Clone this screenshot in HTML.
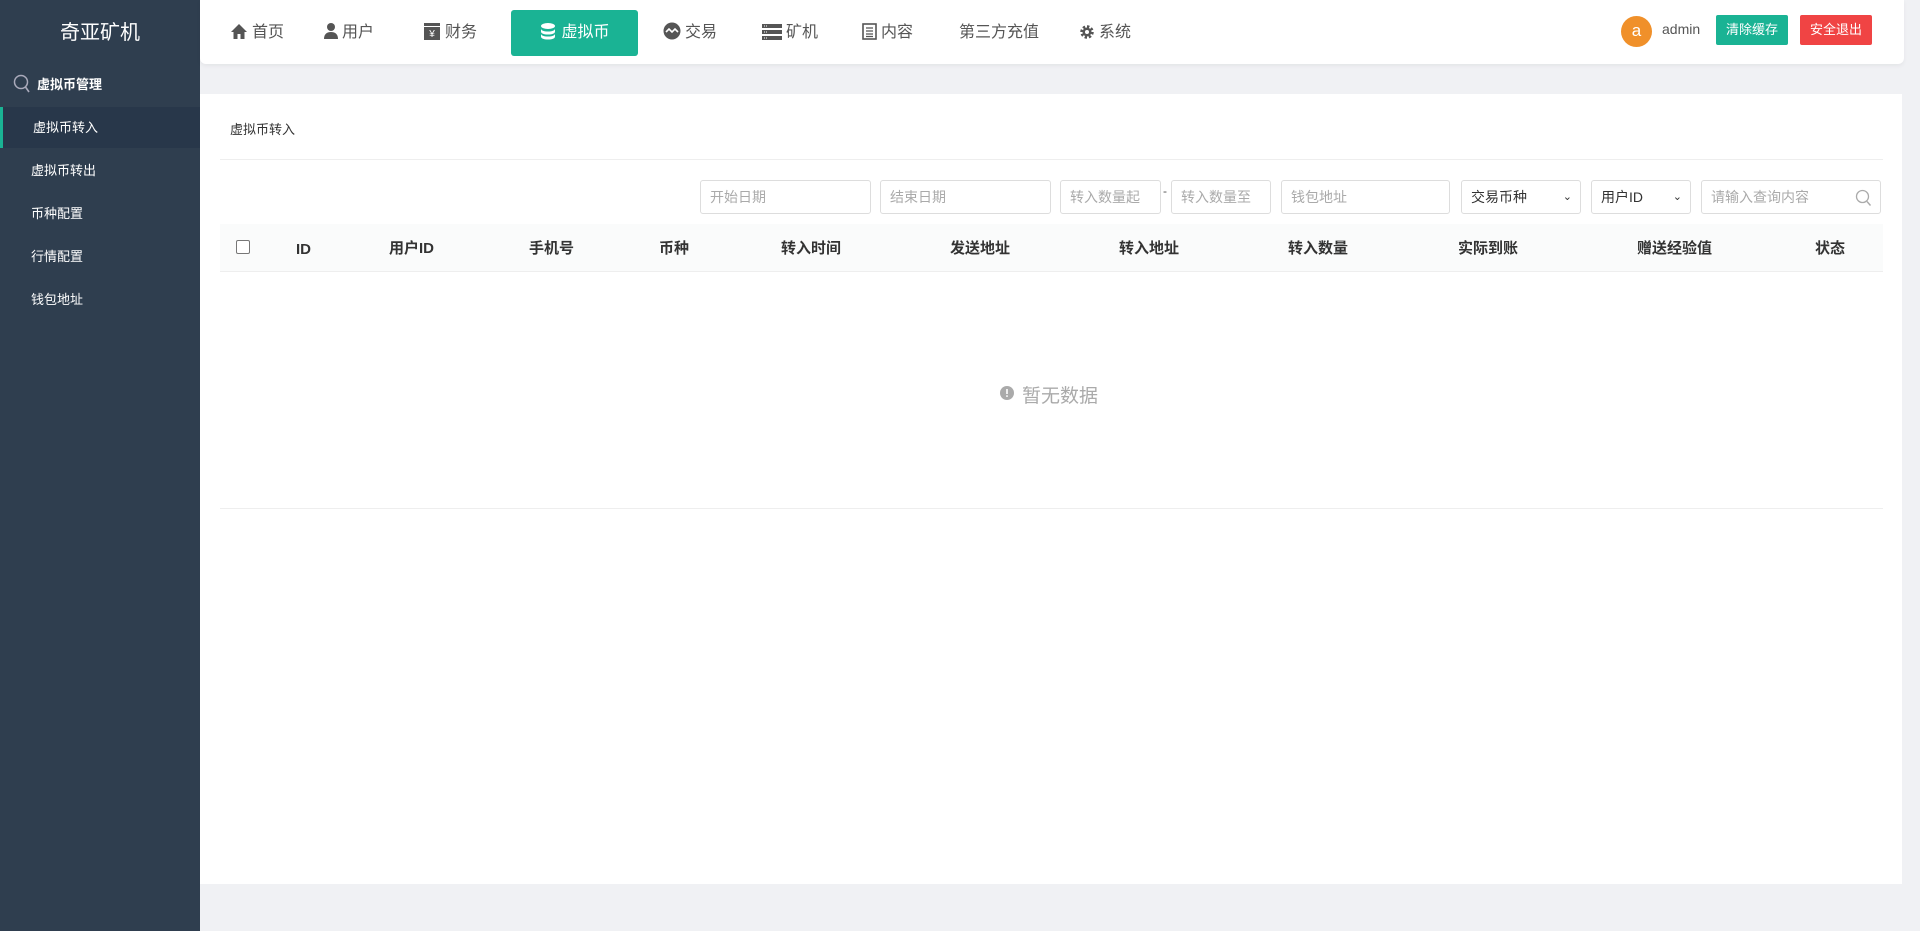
<!DOCTYPE html>
<html><head><meta charset="utf-8"><style>
*{margin:0;padding:0;box-sizing:border-box}
body{width:1920px;height:931px;background:#f0f1f4;font-family:"Liberation Sans","Noto Sans CJK SC",sans-serif;position:relative;overflow:hidden;color:#333}
.a{position:absolute;white-space:nowrap}
#side{position:absolute;left:0;top:0;width:200px;height:931px;background:#2f3e4f}
.mi{position:absolute;left:0;width:200px;height:41px;line-height:41px;color:#fff;font-size:13px;padding-left:31px}
#hdr{position:absolute;left:200px;top:0;width:1704px;height:64px;background:#fff;border-radius:0 0 6px 6px;box-shadow:0 2px 4px rgba(0,0,0,.05)}
.nv{position:absolute;top:22px;font-size:16px;color:#555;line-height:22px}
.nv svg{vertical-align:-3px;margin-right:4px}
.inp{position:absolute;top:180px;height:34px;border:1px solid #ddd;border-radius:3px;background:#fff;font-size:14px;color:#aaa;line-height:32px;padding-left:9px}
.th{position:absolute;top:238px;height:22px;line-height:22px;font-size:15px;font-weight:bold;color:#333}
</style></head><body>
<div id="side">
 <div class="a" style="left:0;width:200px;top:16px;text-align:center;color:#fff;font-size:20px">奇亚矿机</div>
 <svg class="a" style="left:13px;top:74px" width="18" height="20" viewBox="0 0 18 20"><circle cx="8" cy="8" r="6.5" fill="none" stroke="#aab" stroke-width="1.5"/><line x1="12.5" y1="13" x2="16" y2="18" stroke="#aab" stroke-width="1.6"/></svg>
 <div class="a" style="left:37px;top:74px;color:#fff;font-size:13px;font-weight:bold">虚拟币管理</div>
 <div class="mi" style="top:107px;background:#28374a;border-left:3px solid #1ab394;padding-left:30px">虚拟币转入</div>
 <div class="mi" style="top:150px">虚拟币转出</div>
 <div class="mi" style="top:193px">币种配置</div>
 <div class="mi" style="top:236px">行情配置</div>
 <div class="mi" style="top:279px">钱包地址</div>
</div>
<div id="hdr">
 <div class="nv" style="left:30px"><svg width="18" height="18" viewBox="0 0 18 18"><path d="M9 2L1 10h2.5v7h4v-5h3v5h4v-7H17z" fill="#555"/></svg>首页</div>
 <div class="nv" style="left:124px"><svg width="14" height="18" viewBox="0 0 14 18"><circle cx="7" cy="5" r="4" fill="#555"/><path d="M0 17c0-5 3-7 7-7s7 2 7 7z" fill="#555"/></svg>用户</div>
 <div class="nv" style="left:223px"><svg width="18" height="18" viewBox="0 0 18 18"><rect x="1" y="1" width="16" height="3" fill="#555"/><rect x="1" y="5" width="16" height="13" fill="#555"/><text x="9" y="15" font-size="10" fill="#fff" text-anchor="middle" font-family="Liberation Sans">¥</text></svg>财务</div>
 <div class="a" style="left:311px;top:10px;width:127px;height:46px;background:#1ab394;border-radius:3px;color:#fff;font-size:16px;line-height:46px;text-align:center"><svg width="18" height="18" viewBox="0 0 18 18" style="vertical-align:-3px;margin-right:4px"><ellipse cx="9" cy="4" rx="7" ry="3" fill="#fff"/><path d="M2 6.5c0 2 3 3 7 3s7-1 7-3v3c0 2-3 3-7 3s-7-1-7-3zM2 11.5c0 2 3 3 7 3s7-1 7-3v3c0 2-3 3-7 3s-7-1-7-3z" fill="#fff"/></svg>虚拟币</div>
 <div class="nv" style="left:463px"><svg width="18" height="18" viewBox="0 0 18 18"><circle cx="9" cy="9" r="8.5" fill="#555"/><path d="M3 10l3-3 3 3 3-3 3 3" stroke="#fff" stroke-width="1.6" fill="none"/></svg>交易</div>
 <div class="nv" style="left:562px"><svg width="20" height="16" viewBox="0 0 20 16"><rect x="0" y="0" width="20" height="4" fill="#555"/><rect x="0" y="6" width="20" height="4" fill="#555"/><rect x="0" y="12" width="20" height="4" fill="#555"/><g fill="#fff"><rect x="2" y="1.5" width="1" height="1"/><rect x="4" y="1.5" width="1" height="1"/><rect x="2" y="7.5" width="1" height="1"/><rect x="4" y="7.5" width="1" height="1"/><rect x="2" y="13.5" width="1" height="1"/><rect x="4" y="13.5" width="1" height="1"/></g></svg>矿机</div>
 <div class="nv" style="left:662px"><svg width="15" height="17" viewBox="0 0 15 17"><rect x="1" y="1" width="13" height="15" fill="none" stroke="#555" stroke-width="1.6"/><path d="M4 5h7M4 8h7M4 11h7M4 13.5h7" stroke="#555" stroke-width="1.2"/></svg>内容</div>
 <div class="nv" style="left:759px">第三方充值</div>
 <div class="nv" style="left:879px"><svg width="16" height="16" viewBox="0 0 16 16"><circle cx="8" cy="8" r="5" fill="none" stroke="#555" stroke-width="3.5" stroke-dasharray="2.2 1.7"/><circle cx="8" cy="8" r="4.5" fill="#555"/><circle cx="8" cy="8" r="2" fill="#fff"/></svg>系统</div>
 <div class="a" style="left:1421px;top:16px;width:31px;height:31px;border-radius:50%;background:#f0902a;color:#fff;font-size:17px;line-height:29px;text-align:center">a</div>
 <div class="a" style="left:1462px;top:21px;font-size:14px;color:#555">admin</div>
 <div class="a" style="left:1516px;top:15px;width:72px;height:30px;background:#1ab394;border-radius:2px;color:#fff;font-size:13px;line-height:30px;text-align:center">清除缓存</div>
 <div class="a" style="left:1600px;top:15px;width:72px;height:30px;background:#f04444;border-radius:2px;color:#fff;font-size:13px;line-height:30px;text-align:center">安全退出</div>
</div>
<div class="a" style="left:200px;top:94px;width:1702px;height:790px;background:#fff"></div>
<div class="a" style="left:230px;top:119px;font-size:13px;color:#333">虚拟币转入</div>
<div class="a" style="left:220px;top:159px;width:1663px;height:1px;background:#eee"></div>
<div class="inp" style="left:700px;width:171px">开始日期</div>
<div class="inp" style="left:880px;width:171px">结束日期</div>
<div class="inp" style="left:1060px;width:101px">转入数量起</div>
<div class="a" style="left:1163px;top:184px;font-size:12px;color:#555">-</div>
<div class="inp" style="left:1171px;width:100px">转入数量至</div>
<div class="inp" style="left:1281px;width:169px">钱包地址</div>
<div class="inp" style="left:1461px;width:120px;color:#333">交易币种<span style="position:absolute;right:8px;font-size:11px">&#8964;</span></div>
<div class="inp" style="left:1591px;width:100px;color:#333">用户ID<span style="position:absolute;right:8px;font-size:11px">&#8964;</span></div>
<div class="inp" style="left:1701px;width:180px">请输入查询内容<svg style="position:absolute;right:8px;top:8px" width="17" height="18" viewBox="0 0 17 18"><circle cx="7.5" cy="7.5" r="6" fill="none" stroke="#aaa" stroke-width="1.3"/><line x1="12" y1="12.5" x2="15.5" y2="16.5" stroke="#aaa" stroke-width="1.4"/></svg></div>
<div class="a" style="left:220px;top:224px;width:1663px;height:48px;background:#fafbfb;border-bottom:1px solid #eee"></div>
<div class="a" style="left:236px;top:240px;width:14px;height:14px;border:1px solid #777;border-radius:2px;background:#fff"></div>
<div class="th" style="left:296px;top:239px">ID</div>
<div class="th" style="left:389px">用户ID</div>
<div class="th" style="left:529px">手机号</div>
<div class="th" style="left:659px">币种</div>
<div class="th" style="left:781px">转入时间</div>
<div class="th" style="left:950px">发送地址</div>
<div class="th" style="left:1119px">转入地址</div>
<div class="th" style="left:1288px">转入数量</div>
<div class="th" style="left:1458px">实际到账</div>
<div class="th" style="left:1637px">赠送经验值</div>
<div class="th" style="left:1815px">状态</div>
<svg class="a" style="left:1000px;top:386px" width="14" height="14" viewBox="0 0 14 14"><circle cx="7" cy="7" r="7" fill="#aaa"/><rect x="6.2" y="3" width="1.6" height="5" fill="#fff"/><rect x="6.2" y="9.3" width="1.6" height="1.6" fill="#fff"/></svg>
<div class="a" style="left:1022px;top:381px;font-size:19px;color:#aaa">暂无数据</div>
<div class="a" style="left:220px;top:508px;width:1663px;height:1px;background:#eee"></div>
</body></html>
